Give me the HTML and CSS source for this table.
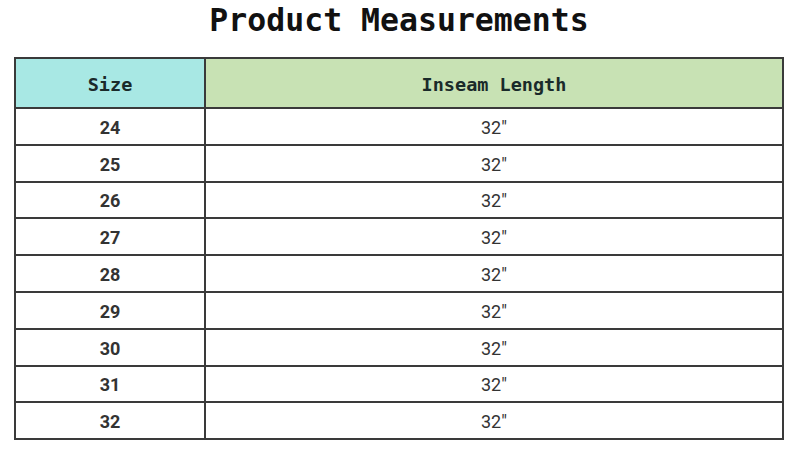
FILE: index.html
```html
<!DOCTYPE html>
<html>
<head>
<meta charset="utf-8">
<link rel="stylesheet" href="styles.css">
</head>
<body>
<div class="page">
  <h1 class="title">Product Measurements</h1>
  <table class="sizes">
    <colgroup><col class="c1"><col class="c2"></colgroup>
    <thead>
      <tr><th class="h-size">Size</th><th class="h-len">Inseam Length</th></tr>
    </thead>
    <tbody>
      <tr><td class="sz">24</td><td class="len">32"</td></tr>
      <tr><td class="sz">25</td><td class="len">32"</td></tr>
      <tr><td class="sz">26</td><td class="len">32"</td></tr>
      <tr><td class="sz">27</td><td class="len">32"</td></tr>
      <tr><td class="sz">28</td><td class="len">32"</td></tr>
      <tr><td class="sz">29</td><td class="len">32"</td></tr>
      <tr><td class="sz">30</td><td class="len">32"</td></tr>
      <tr><td class="sz">31</td><td class="len">32"</td></tr>
      <tr><td class="sz">32</td><td class="len">32"</td></tr>
    </tbody>
  </table>
</div>
</body>
</html>
```
FILE: styles.css
```css
html, body {
  margin: 0;
  padding: 0;
  background: #ffffff;
}
.page {
  width: 800px;
  height: 459px;
  padding: 0 16px 0 14px;
  box-sizing: border-box;
}
.title {
  margin: 0;
  height: 57px;
  padding-top: 2px;
  box-sizing: border-box;
  text-align: center;
  font-family: "DejaVu Sans Mono", "Liberation Mono", monospace;
  font-weight: bold;
  font-size: 31.5px;
  line-height: 36px;
  color: #111;
}
.sizes {
  width: 770px;
  border-collapse: collapse;
  table-layout: fixed;
}
.c1 { width: 190px; }
.sizes th, .sizes td {
  border: 2px solid #3a3a3a;
  text-align: center;
  padding: 0;
}
.sizes th {
  height: 50px;
  padding-top: 3px;
  box-sizing: border-box;
  font-family: "DejaVu Sans Mono", "Liberation Mono", monospace;
  font-weight: bold;
  font-size: 18.5px;
  color: #1a2a2a;
}
.h-size { background: #a8e8e4; }
.h-len { background: #c8e2b4; }
.sizes td {
  height: 32.8px;
  padding-top: 2px;
  font-family: Roboto, "Liberation Sans", sans-serif;
  font-size: 18px;
  color: #333;
}
.sz { font-weight: bold; }
.len { font-weight: normal; }
```
